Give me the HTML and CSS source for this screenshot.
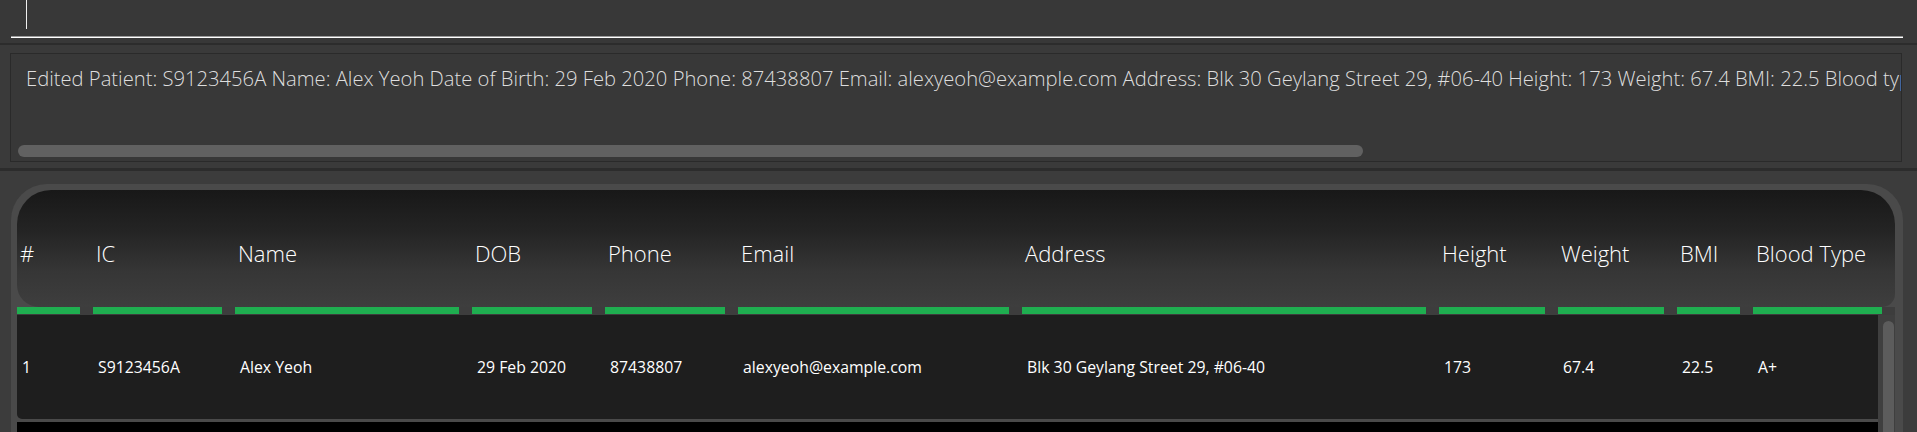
FILE: index.html
```html
<!DOCTYPE html>
<html lang="en">
<head>
<meta charset="utf-8">
<title>Patients</title>
<link rel="stylesheet" href="styles.css">
</head>
<body>
<div class="app">
  <div class="command-box">
    <div class="command-field"><span class="caret"></span></div>
  </div>
  <div class="result-panel">
    <div class="result-box">
      <div class="result-text">Edited Patient: S9123456A Name: Alex Yeoh Date of Birth: 29 Feb 2020 Phone: 87438807 Email: alexyeoh@example.com Address: Blk 30 Geylang Street 29, #06-40 Height: 173 Weight: 67.4 BMI: 22.5 Blood type: A+ Allergies: None</div>
      <div class="hscroll"><div class="hthumb"></div></div>
    </div>
  </div>
  <div class="table-panel">
    <div class="table-frame">
      <div class="table-header">
        <div class="col-label">#</div>
        <div class="col-label">IC</div>
        <div class="col-label">Name</div>
        <div class="col-label">DOB</div>
        <div class="col-label">Phone</div>
        <div class="col-label">Email</div>
        <div class="col-label">Address</div>
        <div class="col-label">Height</div>
        <div class="col-label">Weight</div>
        <div class="col-label">BMI</div>
        <div class="col-label">Blood Type</div>
      </div>
      <div class="header-bars">
        <div class="bar"></div><div class="bar"></div><div class="bar"></div><div class="bar"></div>
        <div class="bar"></div><div class="bar"></div><div class="bar"></div><div class="bar"></div>
        <div class="bar"></div><div class="bar"></div><div class="bar"></div>
      </div>
      <div class="table-body">
        <div class="rows">
          <div class="row">
            <div class="cell">1</div>
            <div class="cell">S9123456A</div>
            <div class="cell">Alex Yeoh</div>
            <div class="cell">29 Feb 2020</div>
            <div class="cell">87438807</div>
            <div class="cell">alexyeoh@example.com</div>
            <div class="cell">Blk 30 Geylang Street 29, #06-40</div>
            <div class="cell">173</div>
            <div class="cell">67.4</div>
            <div class="cell">22.5</div>
            <div class="cell">A+</div>
          </div>
          <div class="row row-empty"></div>
        </div>
        <div class="vscroll"><div class="vthumb"></div></div>
      </div>
    </div>
  </div>
</div>
</body>
</html>
```

FILE: styles.css
```css
html, body {
  margin: 0;
  padding: 0;
  background: #383838;
  overflow: hidden;
}

.app {
  width: 1917px;
  height: 432px;
  display: flex;
  flex-direction: column;
  font-family: "Open Sans", "Noto Sans", sans-serif;
  overflow: hidden;
}

/* command box */
.command-box {
  height: 45px;
  padding: 0 14px 0 11px;
  box-sizing: border-box;
  background: #383838;
  border-bottom: 2px solid #2c2c2c;
  flex: none;
}
.command-field {
  height: 37px;
  border-bottom: 1px solid #ffffff;
  box-shadow: 0 -1px 0 #9a9a9a inset;
  display: flex;
  align-items: flex-start;
}
.caret {
  display: block;
  width: 1px;
  height: 29px;
  margin-left: 15px;
  background: #f0f0f0;
}

/* result display */
.result-panel {
  flex: none;
  height: 126px;
  box-sizing: border-box;
  padding: 8px 15px 6px 10px;
  background: #3a3a3a;
  border-bottom: 3px solid #2c2c2c;
}
.result-box {
  height: 109px;
  box-sizing: border-box;
  border: 1px solid #2a2a2a;
  background: #383838;
  overflow: hidden;
  display: flex;
  flex-direction: column;
}
.result-text {
  white-space: nowrap;
  font-size: 20.2px;
  font-weight: 300;
  color: #dedede;
  padding: 10px 0 0 15px;
  line-height: 28px;
  flex: 1;
}
.hscroll {
  height: 12px;
  margin: 0 0 4px 7px;
}
.hthumb {
  width: 1345px;
  height: 12px;
  border-radius: 6px;
  background: #616161;
}

/* table */
.table-panel {
  flex: 1;
  background: #3c3c3c;
  padding: 13px 14px 0 11px;
  min-height: 0;
}
.table-frame {
  height: 100%;
  background: #4a4a4a;
  border-radius: 36px 36px 0 0;
  padding: 6px 8px 0 6px;
  box-sizing: border-box;
  overflow: hidden;
}
.table-header,
.header-bars,
.row {
  display: grid;
  grid-template-columns: 76px 142px 237px 133px 133px 284px 417px 119px 119px 76px 1fr;
}
.table-header {
  height: 117px;
  border-radius: 34px 34px 13px 22px;
  background: linear-gradient(to bottom, #181818 0%, #242424 35%, #363636 70%, #3e3e3e 100%);
  align-items: center;
}
.col-label {
  font-size: 22px;
  font-weight: 300;
  color: #ffffff;
  padding: 8px 0 0 3px;
  white-space: nowrap;
}
.header-bars {
  height: 8px;
  background: #3d3d3d;
}
.bar {
  height: 7px;
  margin-right: 13px;
  background: #1fae50;
}

.table-body {
  display: flex;
}
.rows {
  width: 1861px;
  flex: none;
}
.row {
  height: 104px;
  background: #1e1e1e;
  border-radius: 0 0 0 5px;
  margin-bottom: 3px;
  align-items: center;
}
.row-empty {
  background: #000000;
  border-radius: 0;
}
.cell {
  font-size: 15.8px;
  color: #ffffff;
  padding-left: 5px;
  white-space: nowrap;
}
.vscroll {
  width: 18px;
  background: #3f3f3f;
  padding: 6px 1px 0 5px;
  box-sizing: border-box;
}
.vthumb {
  height: 200px;
  border-radius: 6px;
  background: #5c5c5c;
}
```
